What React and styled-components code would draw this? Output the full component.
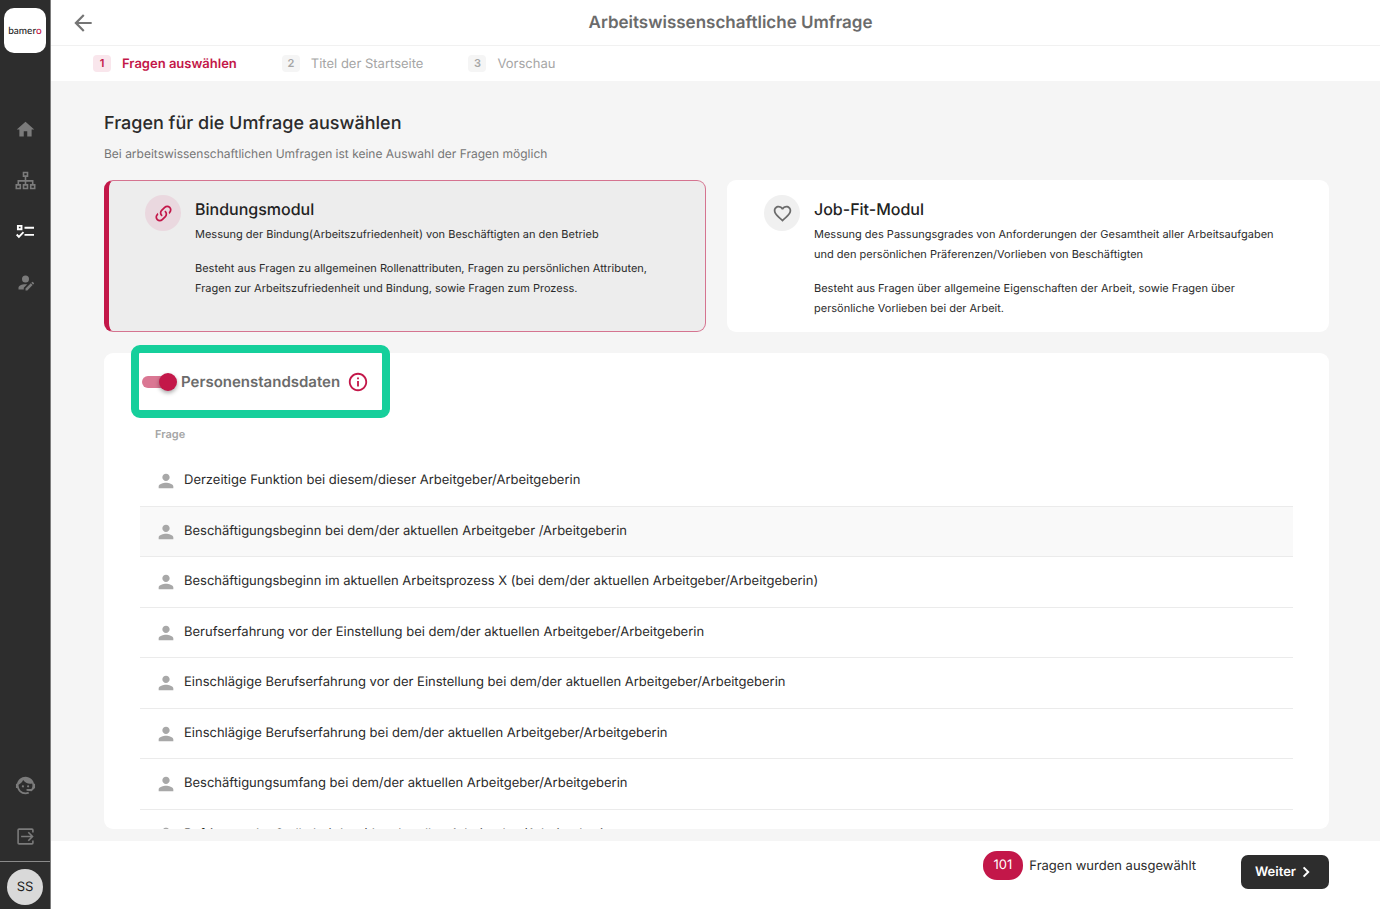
import React from "react";
import styled, { createGlobalStyle } from "styled-components";
import { MdHome, MdPerson, MdInfoOutline, MdFavoriteBorder, MdArrowBack } from "react-icons/md";

const colors = {
  brand: "#c31749",
  dark: "#2d2d2d",
  text: "#2b2b2b",
  muted: "#6b6b6b",
  faint: "#a5a5a5",
  page: "#f5f5f5",
  line: "#ebebeb",
  marker: "#16cf9b",
};

const GlobalStyle = createGlobalStyle`
  *, *::before, *::after { box-sizing: border-box; }
  body { margin: 0; background: ${colors.page}; color: ${colors.text}; font-family: Inter, "Liberation Sans", sans-serif; font-size: 13px; line-height: 20px; text-rendering: geometricPrecision; }
  button { font: inherit; border: 0; cursor: pointer; text-rendering: inherit; }
  h1, h2, h3, p { margin: 0; }
  a { color: inherit; text-decoration: none; }
`;

const Shell = styled.div`
  display: flex;
  height: 100vh;
  overflow: hidden;
`;

const Sidebar = styled.aside`
  display: flex;
  flex-direction: column;
  align-items: center;
  flex: none;
  width: 51px;
  background: ${colors.dark};
  border-right: 1px solid #7d7d7d;
  color: #7b7b7b;
`;

const Logo = styled.a`
  display: flex;
  align-items: center;
  justify-content: center;
  width: 42px;
  height: 45px;
  margin: 8px 0 66px;
  border-radius: 10px;
  background: #fff;
  color: #1f1f1f;
  font-family: Lato, sans-serif;
  font-size: 10px;
  font-weight: 500;

  span { color: ${colors.brand}; }
`;

const Nav = styled.nav`
  display: flex;
  flex-direction: column;
  gap: 30px;
  margin-top: ${(p) => (p.$bottom ? "auto" : "0")};
  margin-bottom: ${(p) => (p.$bottom ? "14px" : "0")};
`;

const NavLink = styled.a`
  display: flex;
  color: ${(p) => (p.$active ? "#fff" : "inherit")};

  svg { width: 21px; height: 21px; }
`;

const Account = styled.div`
  display: flex;
  justify-content: center;
  align-self: stretch;
  padding: 7px 0 4px;
  border-top: 1px solid #8a8a8a;
`;

const Avatar = styled.button`
  width: 36px;
  height: 36px;
  padding: 0;
  border-radius: 50%;
  background: #d9d9d9;
  color: #222;
`;

const Page = styled.div`
  display: flex;
  flex: 1;
  flex-direction: column;
  min-width: 0;
`;

const Header = styled.header`
  display: grid;
  grid-template-columns: 64px 1fr 34px;
  align-items: center;
  flex: none;
  height: 46px;
  background: #fff;
  border-bottom: 1px solid #f1f1f1;
`;

const BackButton = styled.button`
  display: flex;
  justify-content: center;
  padding: 0;
  background: none;
  color: #757575;

  svg { width: 26px; height: 26px; }
`;

const PageTitle = styled.h1`
  color: ${colors.muted};
  font-size: 17px;
  font-weight: 600;
  line-height: 26px;
  text-align: center;
`;

const Steps = styled.ol`
  display: flex;
  align-items: center;
  flex: none;
  gap: 45px;
  height: 35px;
  margin: 0;
  padding: 0 42px;
  background: #fff;
  list-style: none;
`;

const Step = styled.li`
  display: flex;
  align-items: center;
  gap: 11px;
  color: ${(p) => (p.$active ? colors.brand : colors.faint)};
  font-weight: ${(p) => (p.$active ? 600 : 400)};
`;

const StepNumber = styled.span`
  width: 18px;
  border-radius: 4px;
  background: ${(p) => (p.$active ? "#f9e6ec" : "#f5f5f5")};
  font-size: 11px;
  font-weight: 600;
  line-height: 17px;
  text-align: center;
`;

const Content = styled.main`
  display: flex;
  flex: 1;
  flex-direction: column;
  min-height: 0;
  padding: 30px 51px 12px 53px;
`;

const SectionTitle = styled.h2`
  font-size: 18px;
  font-weight: 500;
  line-height: 26px;
`;

const Hint = styled.p`
  margin: 7px 0 16px;
  color: #757575;
  font-size: 12px;
`;

const Modules = styled.div`
  display: grid;
  grid-template-columns: 1fr 1fr;
  gap: 21px;
  flex: none;
  margin-bottom: 21px;
`;

const Module = styled.button`
  display: flex;
  align-items: flex-start;
  gap: 14px;
  min-height: 152px;
  padding: ${(p) => (p.$selected ? "14px 36px 11px" : "15px 37px 11px")};
  border: ${(p) => (p.$selected ? `1px solid ${colors.brand}90` : "0")};
  border-left: ${(p) => (p.$selected ? `5px solid ${colors.brand}` : "0")};
  border-radius: 9px;
  background: ${(p) => (p.$selected ? "#ededed" : "#fff")};
  color: ${colors.text};
  text-align: left;
`;

const ModuleIcon = styled.span`
  display: flex;
  align-items: center;
  justify-content: center;
  flex: none;
  width: 36px;
  height: 36px;
  border-radius: 50%;
  background: ${(p) => (p.$selected ? "#ead8df" : "#f0f0f0")};
  color: ${(p) => (p.$selected ? colors.brand : colors.muted)};

  svg { width: 21px; height: 21px; }
`;

const ModuleText = styled.span`
  display: flex;
  flex-direction: column;
  gap: 14px;
  font-size: 11px;
`;

const ModuleTitle = styled.strong`
  display: block;
  margin: 1px 0 2px;
  color: #222;
  font-size: 16px;
  font-weight: 500;
  line-height: 26px;
`;

const Panel = styled.section`
  display: flex;
  flex: 1;
  flex-direction: column;
  min-height: 0;
  padding: 8px 36px 0;
  border-radius: 9px;
  background: #fff;
`;

const PanelHead = styled.div`
  position: relative;
  display: flex;
  align-items: center;
  flex: none;
  gap: 7px;
  height: 42px;
`;

const Marker = styled.div`
  position: absolute;
  top: -16px;
  left: -9px;
  width: 259px;
  height: 73px;
  border: 8px solid ${colors.marker};
  border-radius: 9px;
  pointer-events: none;
`;

const SwitchLabel = styled.label`
  display: flex;
  align-items: center;
  gap: 5px;
  color: ${colors.muted};
  font-size: 15px;
  font-weight: 600;
  cursor: pointer;
`;

const Switch = styled.input`
  appearance: none;
  display: flex;
  align-items: center;
  width: 34px;
  height: 12px;
  margin: 0 0 0 2px;
  border-radius: 6px;
  background: #da7793;
  cursor: pointer;

  &::before {
    content: "";
    width: 18px;
    height: 18px;
    flex: none;
    border-radius: 50%;
    background: #8c8c8c;
    box-shadow: 0 2px 4px rgba(0, 0, 0, 0.35);
  }

  &:checked::before { margin-left: 17px; background: ${colors.brand}; }
`;

const InfoButton = styled.button`
  display: flex;
  padding: 0;
  background: none;
  color: ${colors.brand};

  svg { width: 22px; height: 22px; }
`;

const TableArea = styled.div`
  flex: 1;
  min-height: 0;
  margin-top: 9px;
  overflow: hidden;
`;

const Questions = styled.table`
  width: 100%;
  border-collapse: separate;
  border-spacing: 0;
`;

const HeadCell = styled.th`
  height: 44px;
  padding: 0 15px;
  color: ${colors.faint};
  font-size: 11px;
  font-weight: 600;
  text-align: left;
`;

const Row = styled.tr`
  height: 50px;
  background: ${(p) => (p.$highlight ? "#f9f9f9" : "transparent")};

  &:nth-child(odd) { height: 51px; }
`;

const Cell = styled.td`
  padding: 0 15px;
  border-bottom: 1px solid ${colors.line};
`;

const Question = styled.div`
  display: flex;
  align-items: center;
  gap: 7px;

  svg { width: 22px; height: 22px; color: #a8a8a8; }
  span { padding-bottom: 2px; }
`;

const Footer = styled.footer`
  display: flex;
  align-items: flex-start;
  justify-content: flex-end;
  flex: none;
  height: 68px;
  padding: 10px 51px 0;
  background: #fff;
`;

const Summary = styled.p`
  display: flex;
  align-items: center;
  gap: 6px;
  margin-right: 45px;
`;

const Count = styled.span`
  padding: 0 11px;
  border-radius: 14px;
  background: ${colors.brand};
  color: #fff;
  line-height: 29px;
`;

const NextButton = styled.button`
  display: flex;
  align-items: center;
  gap: 1px;
  height: 34px;
  margin-top: 4px;
  padding: 0 14px;
  border-radius: 7px;
  background: ${colors.dark};
  color: #fff;
  font-weight: 600;

  svg { width: 18px; height: 18px; }
`;

const SitemapIcon = () => (
  <svg viewBox="-0.5 -0.5 21 21" fill="none" stroke="currentColor" strokeWidth="1.6" aria-hidden="true">
    <path d="M8 2h4v3.6H8zM.8 14.4h4V18h-4zM8 14.4h4V18H8zM15.2 14.4h4V18h-4zM10 5.6v8.8M2.8 14.4v-4h14.4v4" />
  </svg>
);

const ChecklistIcon = () => (
  <svg viewBox="-0.5 -0.5 21 21" fill="none" stroke="currentColor" strokeWidth="1.9" aria-hidden="true">
    <path d="M2.4 4.4h3.6v3.4H2.4zM9 6.2h9.5M9 13.4h9.5M1.2 13l2.2 2.3L8 10.7" />
  </svg>
);

const AccountEditIcon = () => (
  <svg viewBox="0 0 24 24" fill="currentColor" aria-hidden="true">
    <path d="M21.7 13.35l-1 1-2.05-2.05 1-1a.55.55 0 0 1 .77 0l1.28 1.28c.21.21.21.56 0 .77M12 18.94l6.06-6.06 2.05 2.05L14.06 21H12v-2.06M12 14c-4.42 0-8 1.79-8 4v2h6v-1.89l4-4c-.66-.08-1.33-.11-2-.11m0-10a4 4 0 0 0-4 4 4 4 0 0 0 4 4 4 4 0 0 0 4-4 4 4 0 0 0-4-4z" />
  </svg>
);

const AgentIcon = () => (
  <svg viewBox="1 1 22 22" fill="currentColor" aria-hidden="true">
    <path d="M18.72,14.76C19.07,13.91 19.26,13 19.26,12C19.26,11.28 19.15,10.59 18.96,9.95C18.31,10.1 17.63,10.18 16.92,10.18C13.86,10.18 11.15,8.67 9.5,6.34C8.61,8.5 6.91,10.26 4.77,11.22C4.73,11.47 4.73,11.74 4.73,12A7.27,7.27 0 0,0 12,19.27C13.05,19.27 14.06,19.04 14.97,18.63C15.54,19.72 15.8,20.26 15.78,20.26C14.14,20.81 12.87,21.08 12,21.08C9.58,21.08 7.27,20.13 5.57,18.42C4.53,17.38 3.76,16.11 3.33,14.73H2V10.18H3.09C3.93,6.04 7.6,2.92 12,2.92C14.4,2.92 16.71,3.87 18.42,5.58C19.69,6.84 20.54,8.45 20.89,10.18H22V14.73H21.94L18.38,18L13.08,17.4V15.73H17.91L18.72,14.76M9.27,11.77C9.57,11.77 9.86,11.89 10.07,12.11C10.28,12.32 10.4,12.61 10.4,12.91C10.4,13.21 10.28,13.5 10.07,13.71C9.86,13.92 9.57,14.04 9.27,14.04C8.64,14.04 8.13,13.54 8.13,12.91C8.13,12.28 8.64,11.77 9.27,11.77M14.72,11.77C15.35,11.77 15.85,12.28 15.85,12.91C15.85,13.54 15.35,14.04 14.72,14.04C14.09,14.04 13.58,13.54 13.58,12.91A1.14,1.14 0 0,1 14.72,11.77Z" />
  </svg>
);

const ExitIcon = () => (
  <svg viewBox="-0.5 -0.5 21 21" fill="none" stroke="currentColor" strokeWidth="1.6" aria-hidden="true">
    <path d="M17.4 6V3.6a1 1 0 0 0-1-1H3.6a1 1 0 0 0-1 1v12.8a1 1 0 0 0 1 1h12.8a1 1 0 0 0 1-1V14M5.6 10H17M12.8 5.8 17 10l-4.2 4.2" />
  </svg>
);

const LinkIcon = () => (
  <svg viewBox="0 0 24 24" fill="currentColor" aria-hidden="true">
    <path d="M10.59,13.41C11,13.8 11,14.44 10.59,14.83C10.2,15.22 9.56,15.22 9.17,14.83C7.22,12.88 7.22,9.71 9.17,7.76V7.76L12.71,4.22C14.66,2.27 17.83,2.27 19.78,4.22C21.73,6.17 21.73,9.34 19.78,11.29L18.29,12.78C18.3,11.96 18.17,11.14 17.89,10.36L18.36,9.88C19.54,8.71 19.54,6.81 18.36,5.64C17.19,4.46 15.29,4.46 14.12,5.64L10.59,9.17C9.41,10.34 9.41,12.24 10.59,13.41M13.41,9.17C13.8,8.78 14.44,8.78 14.83,9.17C16.78,11.12 16.78,14.29 14.83,16.24V16.24L11.29,19.78C9.34,21.73 6.17,21.73 4.22,19.78C2.27,17.83 2.27,14.66 4.22,12.71L5.71,11.22C5.7,12.04 5.83,12.86 6.11,13.65L5.64,14.12C4.46,15.29 4.46,17.19 5.64,18.36C6.81,19.54 8.71,19.54 9.88,18.36L13.41,14.83C14.59,13.66 14.59,11.76 13.41,10.59C13,10.2 13,9.56 13.41,9.17Z" />
  </svg>
);

const ChevronIcon = () => (
  <svg viewBox="0 0 18 18" fill="none" stroke="currentColor" strokeWidth="2" aria-hidden="true">
    <path d="M6.6 4.4 11.2 9l-4.6 4.6" />
  </svg>
);

const steps = ["Fragen auswählen", "Titel der Startseite", "Vorschau"];

const questions = [
  "Derzeitige Funktion bei diesem/dieser Arbeitgeber/Arbeitgeberin",
  "Beschäftigungsbeginn bei dem/der aktuellen Arbeitgeber /Arbeitgeberin",
  "Beschäftigungsbeginn im aktuellen Arbeitsprozess X (bei dem/der aktuellen Arbeitgeber/Arbeitgeberin)",
  "Berufserfahrung vor der Einstellung bei dem/der aktuellen Arbeitgeber/Arbeitgeberin",
  "Einschlägige Berufserfahrung vor der Einstellung bei dem/der aktuellen Arbeitgeber/Arbeitgeberin",
  "Einschlägige Berufserfahrung bei dem/der aktuellen Arbeitgeber/Arbeitgeberin",
  "Beschäftigungsumfang bei dem/der aktuellen Arbeitgeber/Arbeitgeberin",
  "Befristung der Stelle bei dem/der aktuellen Arbeitgeber/Arbeitgeberin",
];

export default function App() {
  return (
    <Shell>
      <GlobalStyle />
      <Sidebar>
        <Logo href="#">bamer<span>o</span></Logo>
        <Nav aria-label="Hauptnavigation">
          <NavLink href="#" aria-label="Start"><MdHome /></NavLink>
          <NavLink href="#" aria-label="Organisation"><SitemapIcon /></NavLink>
          <NavLink href="#" aria-label="Umfragen" $active><ChecklistIcon /></NavLink>
          <NavLink href="#" aria-label="Benutzer"><AccountEditIcon /></NavLink>
        </Nav>
        <Nav aria-label="Konto" $bottom>
          <NavLink href="#" aria-label="Support"><AgentIcon /></NavLink>
          <NavLink href="#" aria-label="Abmelden"><ExitIcon /></NavLink>
        </Nav>
        <Account><Avatar>SS</Avatar></Account>
      </Sidebar>
      <Page>
        <Header>
          <BackButton aria-label="Zurück"><MdArrowBack /></BackButton>
          <PageTitle>Arbeitswissenschaftliche Umfrage</PageTitle>
        </Header>
        <Steps>
          {steps.map((label, i) => (
            <Step key={label} $active={i === 0}>
              <StepNumber $active={i === 0}>{i + 1}</StepNumber>
              {label}
            </Step>
          ))}
        </Steps>
        <Content>
          <SectionTitle>Fragen für die Umfrage auswählen</SectionTitle>
          <Hint>Bei arbeitswissenschaftlichen Umfragen ist keine Auswahl der Fragen möglich</Hint>
          <Modules>
            <Module $selected>
              <ModuleIcon $selected><LinkIcon /></ModuleIcon>
              <ModuleText>
                <span>
                  <ModuleTitle>Bindungsmodul</ModuleTitle>
                  Messung der Bindung(Arbeitszufriedenheit) von Beschäftigten an den Betrieb
                </span>
                <span>
                  Besteht aus Fragen zu allgemeinen Rollenattributen, Fragen zu persönlichen Attributen,<br />
                  Fragen zur Arbeitszufriedenheit und Bindung, sowie Fragen zum Prozess.
                </span>
              </ModuleText>
            </Module>
            <Module>
              <ModuleIcon><MdFavoriteBorder /></ModuleIcon>
              <ModuleText>
                <span>
                  <ModuleTitle>Job-Fit-Modul</ModuleTitle>
                  Messung des Passungsgrades von Anforderungen der Gesamtheit aller Arbeitsaufgaben<br />
                  und den persönlichen Präferenzen/Vorlieben von Beschäftigten
                </span>
                <span>
                  Besteht aus Fragen über allgemeine Eigenschaften der Arbeit, sowie Fragen über<br />
                  persönliche Vorlieben bei der Arbeit.
                </span>
              </ModuleText>
            </Module>
          </Modules>
          <Panel>
            <PanelHead>
              <SwitchLabel>
                <Switch type="checkbox" defaultChecked />
                Personenstandsdaten
              </SwitchLabel>
              <InfoButton aria-label="Information"><MdInfoOutline /></InfoButton>
              <Marker />
            </PanelHead>
            <TableArea>
              <Questions>
                <thead>
                  <tr><HeadCell scope="col">Frage</HeadCell></tr>
                </thead>
                <tbody>
                  {questions.map((q, i) => (
                    <Row key={q} $highlight={i === 1}>
                      <Cell><Question><MdPerson /><span>{q}</span></Question></Cell>
                    </Row>
                  ))}
                </tbody>
              </Questions>
            </TableArea>
          </Panel>
        </Content>
        <Footer>
          <Summary><Count>101</Count>Fragen wurden ausgewählt</Summary>
          <NextButton>Weiter<ChevronIcon /></NextButton>
        </Footer>
      </Page>
    </Shell>
  );
}
